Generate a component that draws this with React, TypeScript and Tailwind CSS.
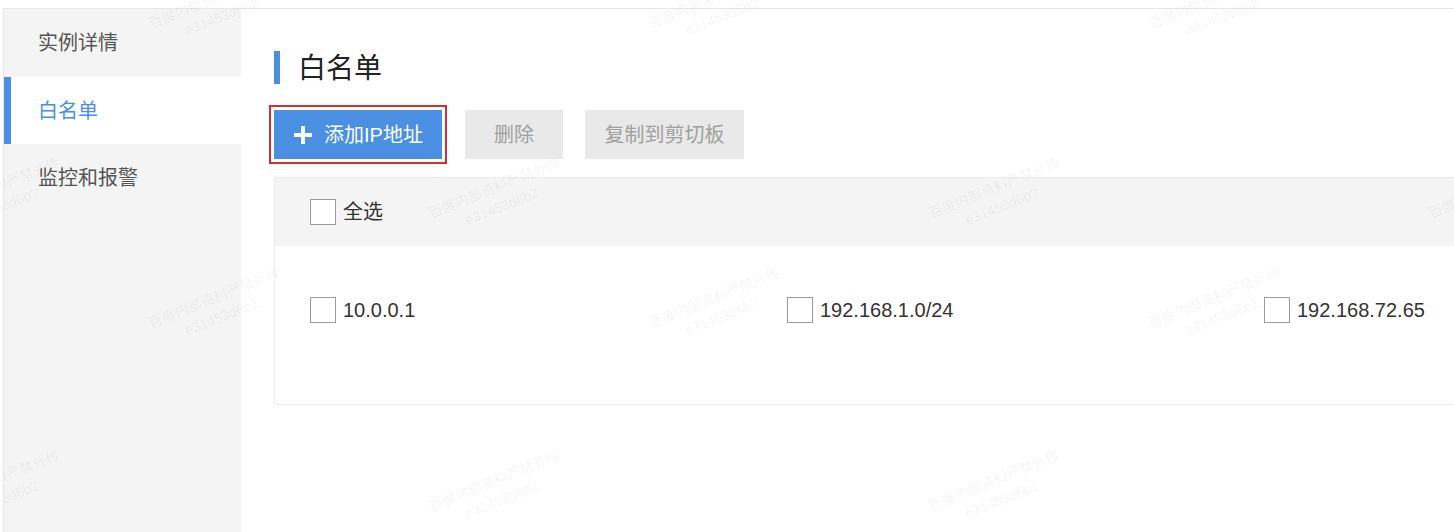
import React from "react";

const FONT = { fontFamily: '"Liberation Sans", "Noto Sans CJK SC", sans-serif' };

const marks = [
  { x: 218, y: 7 },
  { x: 718, y: 7 },
  { x: 1218, y: 7 },
  { x: -2, y: 197 },
  { x: 498, y: 197 },
  { x: 998, y: 197 },
  { x: 1498, y: 197 },
  { x: 218, y: 307 },
  { x: 718, y: 307 },
  { x: 1218, y: 307 },
  { x: -2, y: 490 },
  { x: 498, y: 490 },
  { x: 998, y: 490 },
];

const ips = ["10.0.0.1", "192.168.1.0/24", "192.168.72.65"];

const Checkbox = () => (
  <span className="w-[26px] h-[26px] border border-[#9a9a9a] bg-white shrink-0" />
);

const App = () => {
  return (
    <div
      className="relative w-[1454px] h-[532px] overflow-hidden bg-white pt-2 pl-[3px]"
      style={FONT}
    >
      <div className="flex h-full border-t border-l border-[#e6e6e6]">
        {/* side menu */}
        <div className="w-[237px] shrink-0 bg-[#f4f4f4] text-[20px] text-[#555]">
          <div className="h-[68px] flex items-center pl-[34px]">实例详情</div>
          <div className="h-[67px] flex items-center pl-[27px] bg-white border-l-[7px] border-[#4a8fe2] text-[#4a8fe2]">
            白名单
          </div>
          <div className="h-[67px] flex items-center pl-[34px]">监控和报警</div>
        </div>

        {/* content */}
        <div className="flex-1 min-w-0 pl-[33px] pt-[42px]">
          <div className="flex items-center h-[33px]">
            <span className="w-[6px] h-[33px] bg-[#4a8fe2]" />
            <span className="ml-[18px] text-[28px] text-[#222] leading-none mt-[3px]">白名单</span>
          </div>

          <div className="flex items-center mt-[26px] text-[20px]">
            <button
              type="button"
              className="h-[49px] px-[19px] flex items-center gap-[11px] bg-[#4a8fe2] text-white outline-2 outline-[#d3302f] outline-offset-[3px]"
            >
              <svg width="20" height="20" viewBox="0 0 20 20" className="shrink-0">
                <rect x="8" y="1" width="4" height="18" fill="white" />
                <rect x="1" y="8" width="18" height="4" fill="white" />
              </svg>
              <span>添加IP地址</span>
            </button>
            <button
              type="button"
              className="ml-[23px] h-[49px] w-[98px] flex items-center justify-center bg-[#e9e9e9] text-[#a0a0a0]"
            >
              删除
            </button>
            <button
              type="button"
              className="ml-[22px] h-[49px] w-[159px] flex items-center justify-center bg-[#e9e9e9] text-[#a0a0a0]"
            >
              复制到剪切板
            </button>
          </div>

          <div className="mt-[18px] w-[1520px] border border-[#ebebeb] text-[20px] text-[#333]">
            <div className="h-[68px] bg-[#f4f4f4] flex items-center pl-[35px] gap-[7px]">
              <Checkbox />
              <span>全选</span>
            </div>
            <div className="h-[158px] pt-[51px] pl-[35px] grid grid-cols-[477px_477px_477px] items-start">
              {ips.map((ip) => (
                <div key={ip} className="flex items-center gap-[7px] h-[26px]">
                  <Checkbox />
                  <span>{ip}</span>
                </div>
              ))}
            </div>
          </div>
        </div>
      </div>

      {/* watermark */}
      <div className="absolute inset-0 pointer-events-none">
        {marks.map((m, i) => (
          <div
            key={i}
            className="absolute -translate-x-1/2 -translate-y-1/2 rotate-[-22deg] text-center text-[14px] leading-[20px] text-black/[0.06] whitespace-nowrap"
            style={{ left: m.x, top: m.y }}
          >
            <div>百度内部资料严禁外传</div>
            <div>e31453d6b2</div>
          </div>
        ))}
      </div>
    </div>
  );
};

export default App;
